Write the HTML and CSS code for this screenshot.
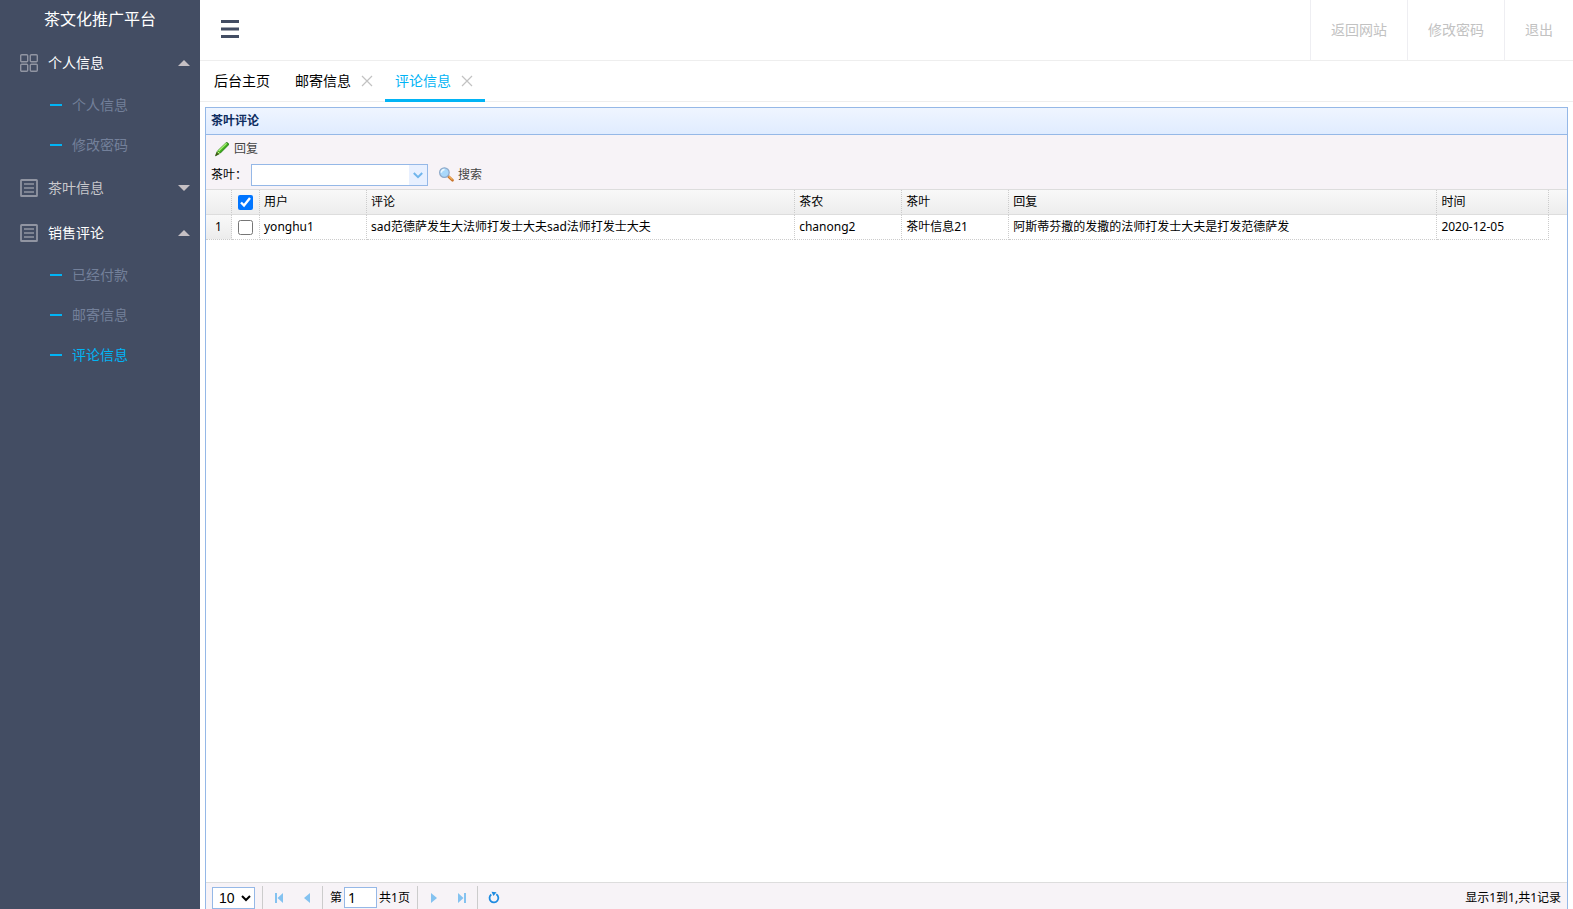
FILE: index.html
```html
<!DOCTYPE html>
<html lang="zh-CN">
<head>
<meta charset="utf-8">
<title>茶文化推广平台</title>
<link rel="stylesheet" href="styles.css">
</head>
<body>
<svg class="defs" aria-hidden="true">
  <symbol id="grid" viewBox="0 0 18 18"><g fill="none" stroke="currentColor" stroke-width="1.4"><rect x=".7" y=".7" width="7" height="7" rx="1"/><rect x="10.3" y=".7" width="7" height="7" rx="1"/><rect x=".7" y="10.3" width="7" height="7" rx="1"/><rect x="10.3" y="10.3" width="7" height="7" rx="1"/></g></symbol>
  <symbol id="list" viewBox="0 0 18 18"><g fill="none" stroke="currentColor" stroke-width="1.8"><rect x="1" y="1" width="16" height="16" rx=".6"/><path d="M4 5h10M4 9h10M4 13h10" stroke-width="1.7"/></g></symbol>
  <symbol id="close" viewBox="0 0 12 12"><path d="M1 1l10 10M11 1L1 11" fill="none" stroke="currentColor" stroke-width="1.2"/></symbol>
</svg>
<aside class="sidebar">
  <h1 class="brand">茶文化推广平台</h1>
  <nav>
    <button class="group open"><svg><use href="#grid"/></svg><span>个人信息</span><i class="caret up"></i></button>
    <a class="sub" href="#">个人信息</a>
    <a class="sub" href="#">修改密码</a>
    <button class="group"><svg><use href="#list"/></svg><span>茶叶信息</span><i class="caret"></i></button>
    <button class="group open"><svg><use href="#list"/></svg><span>销售评论</span><i class="caret up"></i></button>
    <a class="sub" href="#">已经付款</a>
    <a class="sub" href="#">邮寄信息</a>
    <a class="sub current" href="#">评论信息</a>
  </nav>
</aside>
<div class="main">
  <header class="topbar">
    <button class="menu" aria-label="菜单"><svg viewBox="0 0 18 18"><path d="M0 1.5h18M0 9h18M0 16.5h18" stroke="currentColor" stroke-width="3"/></svg></button>
    <nav class="toplinks"><a href="#">返回网站</a><a href="#">修改密码</a><a href="#">退出</a></nav>
  </header>
  <nav class="tabs">
    <div class="tab home"><a href="#">后台主页</a></div>
    <div class="tab"><a href="#">邮寄信息</a><button aria-label="关闭"><svg><use href="#close"/></svg></button></div>
    <div class="tab active"><a href="#">评论信息</a><button aria-label="关闭"><svg><use href="#close"/></svg></button></div>
  </nav>
  <section class="panel">
    <h2 class="panel-title">茶叶评论</h2>
    <div class="toolbar">
      <div class="tools">
        <button class="tool"><svg viewBox="0 0 16 16"><path d="M1.500 14.800l1.800-4.600L12 1.800q.8-.7 1.900.2t.5 2L6 12.400z" fill="#3fae1c" stroke="#1f7413" stroke-width=".8"/><path d="M4.600 10l8-7.700" stroke="#a8ef76" stroke-width="1.400"/><path d="M1.500 14.800l1.200-3.200 1.700 1.800z" fill="#51431f"/><path d="M3.400 10.600l2.400 2" stroke="#e7dc9b"/></svg>回复</button>
      </div>
      <div class="tools filter">
        <label for="tea">茶叶：</label>
        <div class="combo"><input id="tea" type="text"><button aria-label="展开"><svg viewBox="0 0 10 7"><path d="M.8 1l4.2 4.2L9.200 1" fill="none" stroke="#70b5ec" stroke-width="2"/></svg></button></div>
        <button class="tool"><svg viewBox="0 0 16 16"><path d="M10.500 9.500l4 3.800" stroke="#c9742b" stroke-width="2.600" stroke-linecap="round"/><path d="M10.800 9.300l3.600 3.300" stroke="#f3b35c" stroke-width="1.200"/><circle cx="6.400" cy="5.600" r="4.800" fill="#a9d8fb" stroke="#8fa9c9" stroke-width="1.200"/><path d="M3.200 5.600q.4-2.800 3.400-3" fill="none" stroke="#edf8ff" stroke-width="1.500"/></svg>搜索</button>
      </div>
    </div>
    <div class="grid">
      <table>
        <colgroup><col class="c-num"><col class="c-check"><col class="c-short"><col class="c-long"><col class="c-short"><col class="c-short"><col class="c-long"><col><col class="c-end"></colgroup>
        <thead><tr><th></th><th class="check"><input type="checkbox" checked aria-label="全选"></th><th>用户</th><th>评论</th><th>茶农</th><th>茶叶</th><th>回复</th><th>时间</th><th class="end"></th></tr></thead>
        <tbody><tr><td class="num">1</td><td class="check"><input type="checkbox" aria-label="选择"></td><td>yonghu1</td><td>sad范德萨发生大法师打发士大夫sad法师打发士大夫</td><td>chanong2</td><td>茶叶信息21</td><td>阿斯蒂芬撒的发撒的法师打发士大夫是打发范德萨发</td><td>2020-12-05</td><td class="end"></td></tr></tbody>
      </table>
    </div>
    <footer class="pager">
      <select aria-label="每页条数"><option>10</option></select>
      <span class="sep"></span>
      <button aria-label="首页"><svg viewBox="0 0 16 16"><path d="M4 3h2v10H4zM12 3v10L6.500 8z"/></svg></button>
      <button aria-label="上一页"><svg viewBox="0 0 16 16"><path d="M11 3v10L5 8z"/></svg></button>
      <span class="sep"></span>
      <label class="page">第<input type="text" value="1">共1页</label>
      <span class="sep"></span>
      <button aria-label="下一页"><svg viewBox="0 0 16 16"><path d="M5 3v10l6-5z"/></svg></button>
      <button aria-label="末页"><svg viewBox="0 0 16 16"><path d="M10 3h2v10h-2zM4 3v10l5.500-5z"/></svg></button>
      <span class="sep"></span>
      <button aria-label="刷新"><svg viewBox="0 0 16 16"><path d="M10.300 4.300a4.400 4.400 0 1 1-5 .2" fill="none" stroke="#1e8be0" stroke-width="1.800"/><path d="M5.500 1.800l5 .4-3 3.800z" fill="#1e8be0"/></svg></button>
      <span class="info">显示1到1,共1记录</span>
    </footer>
  </section>
</div>
</body>
</html>
```
FILE: styles.css
```css
* { box-sizing: border-box; }
body {
  margin: 0;
  display: flex;
  height: 100vh;
  overflow: hidden;
  background: #fff;
  color: #000;
  font: 14px/20px "Noto Sans", "Noto Sans CJK SC", sans-serif;
}
button, input, select { font: inherit; margin: 0; }
button { border: 0; padding: 0; background: none; color: inherit; }
a { color: inherit; text-decoration: none; }
.defs { position: absolute; width: 0; height: 0; }

.sidebar { flex: 0 0 200px; background: #434d63; }
.brand { margin: 0; padding-bottom: 2px; color: #fff; font-size: 16px; font-weight: 400; line-height: 38px; text-align: center; }
.group {
  display: flex;
  align-items: center;
  gap: 10px;
  width: 100%;
  height: 45px;
  padding: 0 10px 0 20px;
  color: #c8c8cc;
}
.group span { flex: 1; text-align: left; }
.group.open { color: #fff; }
.group svg { width: 18px; height: 18px; color: #9195a2; }
.caret { border: 6px solid transparent; border-top-color: #c6c0c4; border-bottom-width: 0; }
.caret.up { border-width: 0 6px 6px; border-bottom-color: #c6c0c4; }
.sub { display: flex; align-items: center; gap: 10px; height: 40px; padding-left: 50px; color: #73809a; }
.sub::before { content: ""; width: 12px; height: 2px; background: #01b4f5; }
.sub.current { color: #01b4f5; }

.main { flex: 1; min-width: 0; display: flex; flex-direction: column; }
.topbar { display: flex; justify-content: space-between; flex: 0 0 61px; border-bottom: 1px solid #eee; }
.menu { padding: 0 21px 2px; color: #434d63; }
.menu svg { display: block; width: 18px; height: 18px; }
.toplinks { display: flex; color: #c2c2c2; }
.toplinks a { padding: 0 20px; border-left: 1px solid #eeeef2; line-height: 60px; }
.tabs { display: flex; height: 41px; flex: none; padding-left: 4px; border-bottom: 1px solid #eee; }
.tab { display: flex; align-items: center; gap: 10px; height: 41px; padding: 2px 12px 0 10px; border-bottom: 3px solid transparent; }
.tab.home { padding-right: 15px; }
.tab.active { color: #01b4f5; border-bottom-color: #01b4f5; }
.tab button { color: #c2c2c2; }
.tab svg { display: block; width: 12px; height: 12px; }

.panel {
  flex: 1;
  min-height: 0;
  display: flex;
  flex-direction: column;
  margin: 5px 5px 0;
  border: 1px solid #95b8e7;
  border-bottom: 0;
  font-size: 12px;
}
.panel-title {
  margin: 0;
  padding: 0 5px;
  border-bottom: 1px solid #95b8e7;
  background: linear-gradient(#eff5ff, #e0ecff);
  color: #0e2d5f;
  font-size: 12px;
  line-height: 26px;
}
.toolbar { padding: 1px 5px 0; border-bottom: 1px solid #ddd; background: #f7f3f7; }
.tools { display: flex; align-items: center; height: 26px; }
.tools.filter { height: 27px; padding-bottom: 1px; }
.tool { display: flex; align-items: center; gap: 4px; padding: 0 3px; color: #444; }
.tool svg { width: 16px; height: 16px; }
.combo { display: flex; width: 177px; height: 22px; margin: 0 7px 0 4px; border: 1px solid #95b8e7; background: #fff; }
.combo input { flex: 1; min-width: 0; border: 0; padding: 0 4px; outline: 0; }
.combo button { width: 18px; background: #e8f0ff; }
.combo svg { display: block; width: 10px; height: 7px; margin: 0 auto; }

.grid { flex: 1; min-height: 0; }
table { width: 100%; table-layout: fixed; border-collapse: separate; border-spacing: 0; }
.c-num { width: 26px; }
.c-check { width: 28px; }
.c-short { width: 7.87%; }
.c-long { width: 31.45%; }
.c-end { width: 18px; }
th, td {
  height: 25px;
  padding: 0 4px;
  border-right: 1px dotted #ccc;
  border-bottom: 1px dotted #ccc;
  font-weight: 400;
  text-align: left;
  white-space: nowrap;
  overflow: hidden;
}
thead { background: linear-gradient(#f9f9f9, #ececec); }
th { border-bottom: 1px solid #ddd; }
.end { border-right: 0; }
td.end { border-bottom: 0; }
.num { background: linear-gradient(#f9f9f9, #ececec); text-align: center; }
.check { padding: 0; text-align: center; }
.check input { display: block; width: 15px; height: 15px; margin: 0 auto; accent-color: #0075ff; }

.pager { display: flex; align-items: center; padding: 3px 6px 0; border-top: 1px solid #ddd; background: #f7f3f7; }
.pager select { width: 43px; height: 22px; padding: 0 2px; border: 1px solid #95b8e7; background: #fff; color: #000; font: 14px "Liberation Sans", sans-serif; }
.sep { width: 1px; height: 23px; margin: 0 7px; background: #ccc; }
.pager button { width: 16px; margin: 0 6px; }
.pager button:has(+ .sep) { margin-right: 0; }
.sep + button { margin-left: 1px; }
.pager svg { display: block; width: 16px; height: 16px; fill: #84c2f0; }
.page { display: flex; align-items: center; gap: 2px; }
.page input { width: 33px; height: 21px; padding: 0 3px; border: 1px solid #95b8e7; font-size: 14px; }
.info { margin-left: auto; }
```
